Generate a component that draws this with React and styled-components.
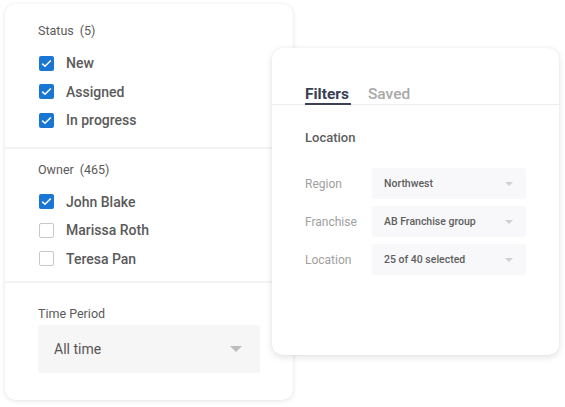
import React from "react";
import styled, { createGlobalStyle } from "styled-components";

const Global = createGlobalStyle`
  html, body { margin: 0; padding: 0; background: #ffffff; }
  body { font-family: Roboto, "Liberation Sans", sans-serif; }
  * { box-sizing: border-box; }
`;

const Canvas = styled.div`
  position: relative;
  width: 565px;
  height: 407px;
  padding: 4px 0 0 5px;
`;

const Card = styled.div`
  background: #fff;
  border-radius: 10px;
  box-shadow: 0 1px 5px rgba(0, 0, 0, 0.1), 0 0 1px rgba(0, 0, 0, 0.08);
`;

const LeftCard = styled(Card)`
  width: 288px;
  height: 396px;
  display: flex;
  flex-direction: column;
  overflow: hidden;
`;

const Section = styled.div`
  padding: ${(p) => p.$pad};
  border-bottom: ${(p) => (p.$divider ? "2px solid #f3f3f3" : "none")};
`;

const GroupTitle = styled.div`
  font-size: 12.5px;
  line-height: 18px;
  color: #5a5a5a;
  margin-bottom: ${(p) => p.$mb || 9}px;
  padding-left: 33px;
`;

const Count = styled.span`
  margin-left: 6px;
`;

const CheckRow = styled.label`
  display: flex;
  align-items: center;
  gap: 12px;
  height: ${(p) => p.$h || 28.5}px;
  padding-left: 34px;
  font-size: 14px;
  font-weight: 500;
  color: #5a5a5a;
`;

const Box = styled.span`
  width: 15px;
  height: 15px;
  border-radius: 2px;
  display: inline-flex;
  align-items: center;
  justify-content: center;
  background: ${(p) => (p.$checked ? "#1976d2" : "#fff")};
  border: ${(p) => (p.$checked ? "none" : "1.5px solid #c8c8c8")};
`;

const BigSelect = styled.div`
  margin-left: 33px;
  width: 222px;
  height: 48px;
  background: #f6f6f6;
  border-radius: 3px;
  display: flex;
  align-items: center;
  justify-content: space-between;
  padding: 0 18px 0 16px;
  font-size: 14px;
  color: #555;
  font-weight: 400;
`;

const Caret = styled.span`
  width: 0;
  height: 0;
  border-left: ${(p) => p.$w / 2}px solid transparent;
  border-right: ${(p) => p.$w / 2}px solid transparent;
  border-top: ${(p) => p.$h}px solid ${(p) => p.$c};
`;

const RightCard = styled(Card)`
  position: absolute;
  left: 272px;
  top: 48px;
  width: 287px;
  height: 307px;
  box-shadow: 0 2px 7px rgba(0, 0, 0, 0.12), 0 0 1px rgba(0, 0, 0, 0.1);
`;

const TabBar = styled.div`
  margin-top: 37px;
  padding: 0 33px;
  display: flex;
  gap: 17px;
  border-bottom: 1px solid #ececec;
`;

const Tab = styled.div`
  font-size: 15.5px;
  line-height: 18px;
  font-weight: ${(p) => (p.$active ? 700 : 500)};
  color: ${(p) => (p.$active ? "#3b4152" : "#a8a8a8")};
  padding: 0 ${(p) => (p.$active ? 2 : 0)}px 0 0;
  border-bottom: 2px solid ${(p) => (p.$active ? "#3b4152" : "transparent")};
  margin-bottom: -1px;
`;

const Body = styled.div`
  padding: 24px 33px 0 33px;
`;

const SubTitle = styled.div`
  font-size: 13px;
  line-height: 17px;
  font-weight: 500;
  color: #5e5e5e;
  margin-bottom: 22px;
`;

const FieldList = styled.div`
  display: flex;
  flex-direction: column;
  gap: 7px;
`;

const Field = styled.div`
  display: flex;
  align-items: center;
`;

const FieldLabel = styled.div`
  width: 67px;
  font-size: 12px;
  color: #a0a0a0;
`;

const SmallSelect = styled.div`
  width: 154px;
  height: 31px;
  background: #f8f8fa;
  border-radius: 3px;
  display: flex;
  align-items: center;
  justify-content: space-between;
  padding: 0 13px 0 12px;
  font-size: 10.5px;
  font-weight: 500;
  color: #5e5e5e;
`;

const Tick = () => (
  <svg width="11" height="9" viewBox="0 0 11 9">
    <path d="M1.2 4.6 L4 7.3 L9.8 1.5" fill="none" stroke="#fff" strokeWidth="1.5" />
  </svg>
);

const Check = ({ checked, children }) => (
  <CheckRow>
    <Box $checked={checked}>{checked && <Tick />}</Box>
    {children}
  </CheckRow>
);

export default function App() {
  return (
    <>
      <Global />
      <Canvas>
        <LeftCard>
          <Section $pad="18px 0 12px 0" $divider>
            <GroupTitle>
              Status<Count>(5)</Count>
            </GroupTitle>
            <Check checked>New</Check>
            <Check checked>Assigned</Check>
            <Check checked>In progress</Check>
          </Section>
          <Section $pad="12px 0 8px 0" $divider>
            <GroupTitle>
              Owner<Count>(465)</Count>
            </GroupTitle>
            <Check checked>John Blake</Check>
            <Check>Marissa Roth</Check>
            <Check>Teresa Pan</Check>
          </Section>
          <Section $pad="22px 0 0 0">
            <GroupTitle $mb={2}>Time Period</GroupTitle>
            <BigSelect>
              All time
              <Caret $w={13} $h={6} $c="#bdbdbd" />
            </BigSelect>
          </Section>
        </LeftCard>
        <RightCard>
          <TabBar>
            <Tab $active>Filters</Tab>
            <Tab>Saved</Tab>
          </TabBar>
          <Body>
            <SubTitle>Location</SubTitle>
            <FieldList>
              <Field>
                <FieldLabel>Region</FieldLabel>
                <SmallSelect>
                  Northwest
                  <Caret $w={8} $h={4} $c="#cfcfd4" />
                </SmallSelect>
              </Field>
              <Field>
                <FieldLabel>Franchise</FieldLabel>
                <SmallSelect>
                  AB Franchise group
                  <Caret $w={8} $h={4} $c="#cfcfd4" />
                </SmallSelect>
              </Field>
              <Field>
                <FieldLabel>Location</FieldLabel>
                <SmallSelect>
                  25 of 40 selected
                  <Caret $w={8} $h={4} $c="#cfcfd4" />
                </SmallSelect>
              </Field>
            </FieldList>
          </Body>
        </RightCard>
      </Canvas>
    </>
  );
}
